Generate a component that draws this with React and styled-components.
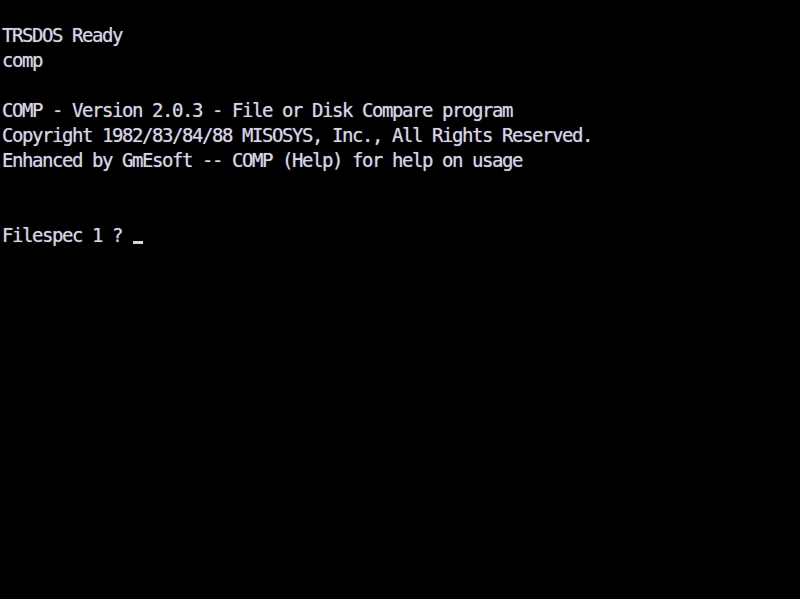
import React from "react";
import styled, { createGlobalStyle } from "styled-components";

const Global = createGlobalStyle`
  html, body { margin: 0; padding: 0; background: #000; }
  #root { width: 800px; height: 599px; }
`;

const Screen = styled.div`
  width: 800px;
  height: 599px;
  background: #000;
  box-sizing: border-box;
  padding: 23px 0 0 2px;
  overflow: hidden;
`;

const Line = styled.div`
  height: 25px;
  line-height: 25px;
  white-space: pre;
  font-family: "DejaVu Sans Mono", "Liberation Mono", monospace;
  font-size: 19px;
  letter-spacing: -1.44px;
  color: #d8d4e6;
  text-shadow: 0 0 1px rgba(216, 212, 230, 0.6);
`;

const Cursor = styled.span`
  display: inline-block;
  width: 10px;
  height: 3px;
  margin-left: 1px;
  background: #d8d4e6;
  vertical-align: -2px;
`;

const lines = [
  "TRSDOS Ready",
  "comp",
  "",
  "COMP - Version 2.0.3 - File or Disk Compare program",
  "Copyright 1982/83/84/88 MISOSYS, Inc., All Rights Reserved.",
  "Enhanced by GmEsoft -- COMP (Help) for help on usage",
  "",
  "",
];

export default function App() {
  return (
    <>
      <Global />
      <Screen>
        {lines.map((t, i) => (
          <Line key={i}>{t}</Line>
        ))}
        <Line>
          {"Filespec 1 ? "}
          <Cursor />
        </Line>
      </Screen>
    </>
  );
}
